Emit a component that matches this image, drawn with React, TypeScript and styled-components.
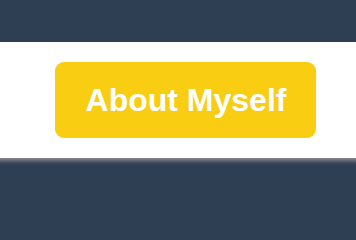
import React from "react"
import styled, { createGlobalStyle } from "styled-components"

const GlobalStyle = createGlobalStyle`
  html, body {
    margin: 0;
    padding: 0;
    background: #2e3e53;
    font-family: "Liberation Sans", Arial, Helvetica, sans-serif;
  }
`

const TopBar = styled.header`
  height: 42px;
  background: #2e3e53;
`

const Section = styled.section`
  display: flex;
  justify-content: flex-start;
  align-items: center;
  height: 116px;
  padding-left: 55px;
  background: #ffffff;
`

const Button = styled.button`
  display: flex;
  align-items: center;
  justify-content: center;
  width: 261px;
  height: 76px;
  padding: 0 0 0 1px;
  border: none;
  border-radius: 9px;
  background: #f9cd12;
  color: #ffffff;
  font-family: "Liberation Sans", Arial, Helvetica, sans-serif;
  font-weight: 700;
  font-size: 32px;
  cursor: pointer;
`

const Footer = styled.footer`
  height: 56px;
  background: linear-gradient(#85878c 0px, #5c6571 3px, #3a4859 5px, #2e3e53 8px);
`

export default () => (
  <>
    <GlobalStyle />
    <TopBar />
    <Section>
      <Button>About Myself</Button>
    </Section>
    <Footer />
  </>
)
